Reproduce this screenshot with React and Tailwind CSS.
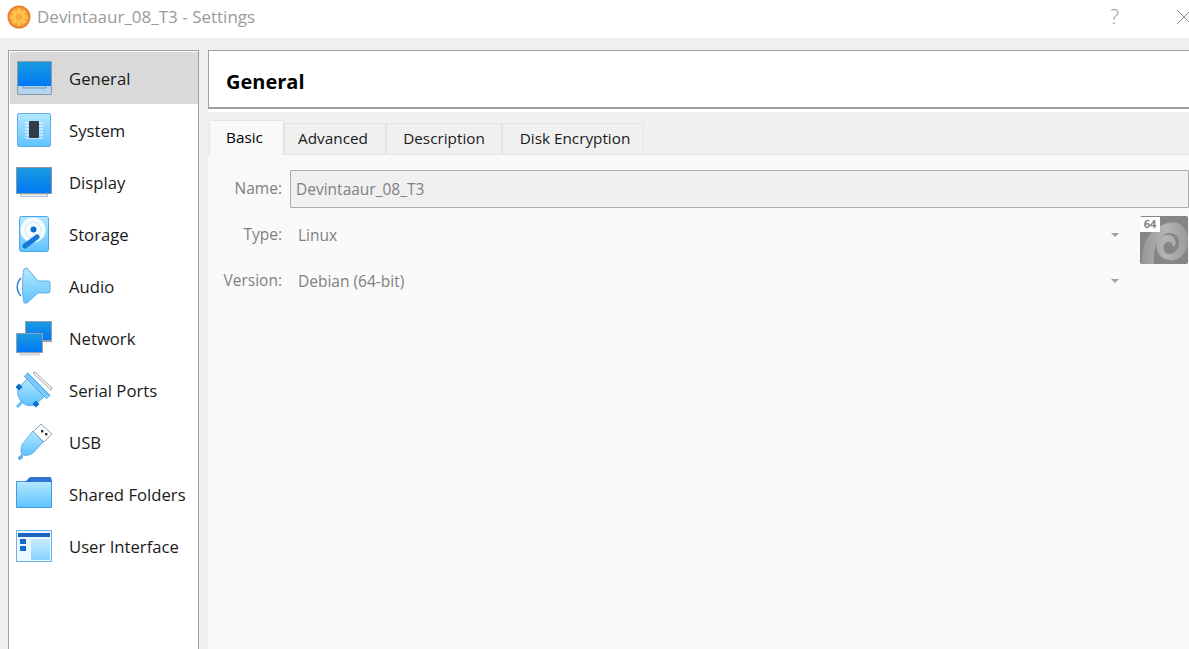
import { useState } from "react";

const blueGrad = "url(#screenGrad)";

function Defs() {
  return (
    <svg width="0" height="0" className="absolute">
      <defs>
        <linearGradient id="screenGrad" x1="0" y1="0" x2="0" y2="1">
          <stop offset="0" stopColor="#1a9ae0" />
          <stop offset="1" stopColor="#0079f5" />
        </linearGradient>
        <linearGradient id="lightGrad" x1="0" y1="0" x2="0" y2="1">
          <stop offset="0" stopColor="#b5e8ff" />
          <stop offset="1" stopColor="#5fc3ff" />
        </linearGradient>
        <linearGradient id="swirlGrad" x1="0" y1="0" x2="1" y2="0">
          <stop offset="0" stopColor="#979797" />
          <stop offset="0.5" stopColor="#b4b4b4" />
          <stop offset="1" stopColor="#9a9a9a" />
        </linearGradient>
      </defs>
    </svg>
  );
}

const icons = {
  General: (
    <g>
      <rect x="1" y="2" width="35" height="34" rx="1" fill="#8a9aa8" />
      <rect x="2" y="3" width="33" height="24" fill={blueGrad} />
      <rect x="2" y="27" width="33" height="8" fill="#b4d4f0" />
      <path d="M7 27v2h23v-2" fill="none" stroke="#7f97ad" />
    </g>
  ),
  System: (
    <g>
      <rect x="1.500" y="2.500" width="33" height="33" rx="1.500" fill="url(#lightGrad)" stroke="#62aee6" />
      <path d="M9 12h18M9 15h18M9 18h18M9 21h18M9 24h18M9 27h18" stroke="#fff" strokeWidth="1" />
      <rect x="13" y="10" width="10" height="17" rx="1" fill="#333d4a" />
    </g>
  ),
  Display: (
    <g>
      <rect x="0" y="4" width="36" height="27" fill="#8c98a3" />
      <rect x="1" y="5" width="34" height="25" fill={blueGrad} />
      <path d="M4.500 31h27v2.500h-27z" fill="#eef2f5" stroke="#9aa6b0" strokeWidth="0.7" />
    </g>
  ),
  Storage: (
    <g>
      <rect x="3.500" y="1.500" width="29" height="35" rx="2" fill="url(#lightGrad)" stroke="#4ba6ea" />
      <circle cx="17" cy="15" r="12.500" fill="#f6fcff" />
      <circle cx="17" cy="15" r="8" fill="none" stroke="#d6f0ff" strokeWidth="1.500" />
      <circle cx="17.500" cy="14.500" r="3" fill="#0a6fd0" />
      <path d="M21 22L9 31" stroke="#1578d8" strokeWidth="5" strokeLinecap="round" />
    </g>
  ),
  Audio: (
    <g>
      <path d="M8 2l3-1 11 13h10a2 2 0 0 1 2 2v8a2 2 0 0 1-2 2H22L11 36H8C6 28 6 10 8 2z" fill="url(#lightGrad)" stroke="#62aee6" />
      <path d="M5 11c-5 5-5 13 0 18" fill="none" stroke="#2b7fd4" strokeWidth="1.500" />
    </g>
  ),
  Network: (
    <g>
      <rect x="9" y="2" width="27" height="21" fill="#93a0ab" />
      <rect x="10" y="3" width="25" height="18" fill={blueGrad} />
      <rect x="0" y="14" width="27" height="22" fill="#fff" />
      <rect x="0" y="14" width="27" height="20" fill="#93a0ab" />
      <rect x="1" y="15" width="25" height="18" fill={blueGrad} />
      <path d="M4 34h19v2H4z" fill="#eef2f5" stroke="#9aa6b0" strokeWidth="0.6" />
    </g>
  ),
  "Serial Ports": (
    <g>
      <path d="M17 2l2-1 17 16-1 2z" fill="#fff" stroke="#93a0ab" />
      <path d="M3 16L13 6l17 18-10 9c-5 3-11 2-15-3S1 20 3 16z" fill="url(#lightGrad)" stroke="#62aee6" />
      <path d="M10 3l23 23" stroke="#7dcbfb" strokeWidth="5" />
      <path d="M11 2l23 23M8 5l23 23" stroke="#4ba6ea" strokeWidth="1" />
      <path d="M7 30l-6 6" stroke="#62c0fa" strokeWidth="3" />
      <rect x="0.500" y="13.500" width="5" height="5" transform="rotate(45 3 16)" fill="#0a6fd0" />
      <rect x="17.500" y="30.500" width="5" height="5" transform="rotate(45 20 33)" fill="#0a6fd0" />
    </g>
  ),
  USB: (
    <g>
      <path d="M25 1l11 10-8 8-11-10z" fill="#fff" stroke="#93a0ab" />
      <rect x="25" y="7" width="2.400" height="2.400" fill="#333" />
      <rect x="29" y="10" width="2.400" height="2.400" fill="#333" />
      <path d="M17 8l10 11-9 10c-3 3-8 4-12 3-2-5-1-10 3-14z" fill="url(#lightGrad)" stroke="#62aee6" />
      <path d="M5 32l-3 3 2 2 3-3z" fill="#5fb4f0" stroke="#62aee6" />
    </g>
  ),
  "Shared Folders": (
    <g>
      <path d="M0.500 6.500h35v26h-35z" fill="url(#lightGrad)" stroke="#3f9be6" />
      <path d="M9 7l5-5h21l1 5z" fill="#2f74d0" />
    </g>
  ),
  "User Interface": (
    <g>
      <rect x="0.500" y="3.500" width="35" height="31" fill="#eaf7ff" stroke="#6db2e8" />
      <rect x="2" y="6" width="32" height="4" fill="#1d63c0" />
      <rect x="15" y="12" width="19" height="21" fill="url(#lightGrad)" opacity="0.7" />
      <rect x="4" y="12" width="6" height="5" fill="#0f6bd0" />
      <rect x="4" y="19" width="6" height="5" fill="#0f6bd0" />
    </g>
  ),
};

const pages = Object.keys(icons);
const tabs = ["Basic", "Advanced", "Description", "Disk Encryption"];
const tabWidths = {
  Basic: "w-[75px] pr-[4px]",
  Advanced: "w-[102px] pr-[4px]",
  Description: "w-[116px]",
  "Disk Encryption": "w-[142px] pl-[4px]",
};

function Combo({ value }) {
  return (
    <div className="flex h-[38px] w-[841px] items-center justify-between bg-[#fafafa] pl-[7px] pr-[13px] text-[#808080]">
      <span className="pt-[2px]">{value}</span>
      <span className="h-0 w-0 border-x-[4px] border-t-[4px] border-x-transparent border-t-[#a0a0a0]" />
    </div>
  );
}

export default function App() {
  const [active, setActive] = useState("General");
  const [tab, setTab] = useState("Basic");

  return (
    <div className="h-[649px] w-[1189px] overflow-hidden bg-[#f0f0f0] text-[16.7px] font-['Open_Sans',sans-serif] text-[#1a1a1a]">
      <Defs />
      {/* title bar */}
      <div className="flex h-[38px] items-center bg-white pl-[7px] pb-[4px]">
        <svg width="24" height="24" viewBox="0 0 24 24">
          <circle cx="12" cy="12" r="11.500" fill="#ec7d2a" />
          <circle cx="12" cy="12" r="10" fill="#f59a34" />
          <g fill="#fcc24a">
            <circle cx="12" cy="12" r="6.500" />
            <rect x="10" y="3.500" width="4" height="17" />
            <rect x="3.500" y="10" width="17" height="4" />
            <rect x="10" y="3.500" width="4" height="17" transform="rotate(45 12 12)" />
            <rect x="3.500" y="10" width="17" height="4" transform="rotate(45 12 12)" />
          </g>
          <circle cx="12" cy="12" r="3" fill="#f7a83a" />
        </svg>
        <span className="ml-[6px] text-[17px] text-[#9a9a9a]">Devintaaur_08_T3 - Settings</span>
        <span className="ml-auto mr-[57px] text-[20px] font-light text-[#9a9a9a]">?</span>
        <svg width="14" height="16" viewBox="0 0 14 16" className="mr-[-1px]">
          <path d="M1 1l14 14M15 1L1 15" stroke="#8a8a8a" fill="none" />
        </svg>
      </div>

      <div className="flex h-[611px] gap-[9px] pl-[8px] pt-[12px]">
        {/* page list */}
        <div className="h-[620px] w-[191px] border border-[#9aa0a6] bg-white pt-px pl-px">
          {pages.map((name) => (
            <button
              key={name}
              onClick={() => setActive(name)}
              className={`flex h-[52px] w-full items-center text-left ${active === name ? "bg-[#d9d9d9]" : ""}`}
            >
              <svg width="38" height="38" viewBox="0 0 38 38" className="ml-[6px] shrink-0">
                {icons[name]}
              </svg>
              <span className="ml-[15px] whitespace-nowrap pt-[2px]">{name}</span>
            </button>
          ))}
        </div>

        {/* right side */}
        <div className="flex min-w-0 flex-1 flex-col">
          <div className="flex h-[59px] shrink-0 items-center border-t border-l border-t-[#9aa0a6] border-l-[#9aa0a6] border-b-2 border-b-[#a0a0a0] bg-white pl-[17px] pt-[5px] text-[20px] font-bold text-black">
            General
          </div>
          <div className="h-[3px] shrink-0 bg-white" />
          <div className="flex h-[43px] shrink-0 items-end border-b border-[#e4e4e4] pl-px text-[15.3px]">
            {tabs.map((t) => (
              <button
                key={t}
                onClick={() => setTab(t)}
                className={`${tabWidths[t]} border border-[#e4e4e4] pb-[2px] text-center ${
                  tab === t
                    ? "relative top-px h-[35px] border-b-0 bg-[#f9f9f9] text-black"
                    : "h-[31px] border-b-0 bg-[#f0f0f0]"
                }`}
              >
                {t}
              </button>
            ))}
          </div>

          {/* Basic tab */}
          <div className="flex-1 bg-[#f9f9f9] pl-px pt-[15px] text-[15.5px] text-[#808080]">
            <div className="flex items-center gap-[8px]">
              <label className="w-[73px] text-right">Name:</label>
              <div className="flex h-[38px] flex-1 items-center rounded-[1px] border border-[#ababab] bg-[#f0f0f0] pl-[5px] pt-[2px]">
                Devintaaur_08_T3
              </div>
            </div>
            <div className="mt-[8px] flex items-start">
              <div className="flex flex-col gap-[8px]">
                <div className="flex items-center">
                  <label className="w-[73px] text-right">Type:</label>
                  <div className="ml-[9px]"><Combo value="Linux" /></div>
                </div>
                <div className="flex items-center">
                  <label className="w-[73px] text-right">Version:</label>
                  <div className="ml-[9px]"><Combo value="Debian (64-bit)" /></div>
                </div>
              </div>
              <div className="relative ml-[8px] h-[48px] w-[48px] overflow-hidden rounded-[2px] bg-[#858585]">
                <svg width="48" height="48" viewBox="0 0 48 48">
                  <path
                    d="M2 48C1 30 8 12 28 7c14-3 22 9 20 21-2 12-12 18-20 16-9-2-13-10-11-17 2-7 10-10 15-7 5 3 5 10 1 11 0-3-3-6-6-5-4 1-5 8-1 11 5 3 12-1 13-9 1-9-7-13-14-10C16 22 13 34 14 48z"
                    fill="url(#swirlGrad)"
                  />
                </svg>
                <div className="absolute left-0 top-px flex h-[15px] w-[20px] items-center justify-center bg-white text-[11px] font-bold text-[#808080]">
                  64
                </div>
              </div>
            </div>
          </div>
        </div>
      </div>
    </div>
  );
}
